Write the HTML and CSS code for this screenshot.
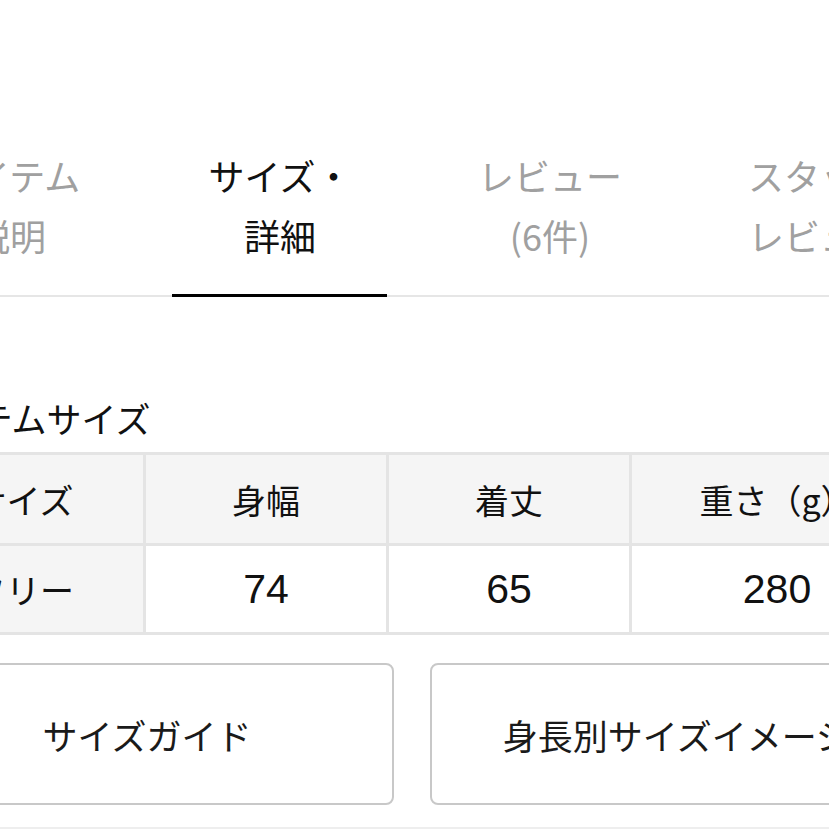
FILE: index.html
```html
<!DOCTYPE html>
<html lang="ja">
<head>
<meta charset="utf-8">
<link rel="stylesheet" href="styles.css">
</head>
<body>
<div class="page">
  <nav class="tabs">
    <div class="tab">アイテム<br>説明</div>
    <div class="tab active">サイズ・<br>詳細</div>
    <div class="tab">レビュー<br>(6件)</div>
    <div class="tab">スタッフ<br>レビュー</div>
  </nav>

  <section class="content">
    <h2 class="title">アイテムサイズ</h2>
    <div class="sizes">
      <div class="cell head">サイズ</div>
      <div class="cell head">身幅</div>
      <div class="cell head">着丈</div>
      <div class="cell head">重さ（g）</div>
      <div class="cell head">フリー</div>
      <div class="cell num">74</div>
      <div class="cell num">65</div>
      <div class="cell num">280</div>
    </div>
    <div class="buttons">
      <button class="btn">サイズガイド</button>
      <button class="btn">身長別サイズイメージ</button>
    </div>
  </section>
  <div class="rule"></div>
</div>
</body>
</html>
```

FILE: styles.css
```css
html, body {
  margin: 0;
  padding: 0;
  background: #fff;
  overflow: hidden;
}
body {
  width: 829px;
  height: 829px;
  font-family: "Noto Sans CJK JP", "Noto Sans", sans-serif;
  color: #111;
}
.page {
  width: 829px;
  overflow: hidden;
}
.tabs {
  display: flex;
  margin-top: 145px;
  margin-left: -125px;
  width: 1100px;
  border-bottom: 2px solid #e6e6e6;
}
.tab {
  position: relative;
  width: 270px;
  flex: none;
  text-align: center;
  font-size: 36px;
  line-height: 60px;
  padding-bottom: 30px;
  color: #a0a0a0;
  white-space: nowrap;
}
.tab.active {
  color: #111;
}
.tab.active::after {
  content: "";
  position: absolute;
  left: 27px;
  right: 28px;
  bottom: -2px;
  height: 3px;
  background: #000;
}
.content {
  margin-left: -100px;
  width: 1024px;
}
.title {
  margin: 101px 0 14px 10px;
  font-size: 35px;
  font-weight: normal;
  line-height: 40px;
  color: #111;
}
.sizes {
  display: grid;
  grid-template-columns: 240px 240px 240px 290px;
  grid-template-rows: 88px 86px;
  gap: 3px;
  padding: 3px;
  width: max-content;
  background: #e4e4e4;
}
.cell {
  display: flex;
  align-items: center;
  justify-content: center;
  background: #fff;
  font-size: 34px;
  color: #111;
  white-space: nowrap;
}
.cell.head {
  background: #f5f5f5;
}
.cell.num {
  font-family: "Liberation Sans", "Noto Sans CJK JP", sans-serif;
  font-size: 41px;
}
.buttons {
  display: grid;
  grid-template-columns: 1fr 1fr;
  gap: 36px;
  margin-top: 28px;
}
.btn {
  height: 142px;
  border: 2px solid #c8c8c8;
  border-radius: 8px;
  background: #fff;
  font-family: "Noto Sans CJK JP", sans-serif;
  font-size: 35px;
  color: #1a1a1a;
  white-space: nowrap;
  overflow: hidden;
  padding: 0;
}
.rule {
  margin-top: 22px;
  border-top: 2px solid #eeeeee;
}
```
